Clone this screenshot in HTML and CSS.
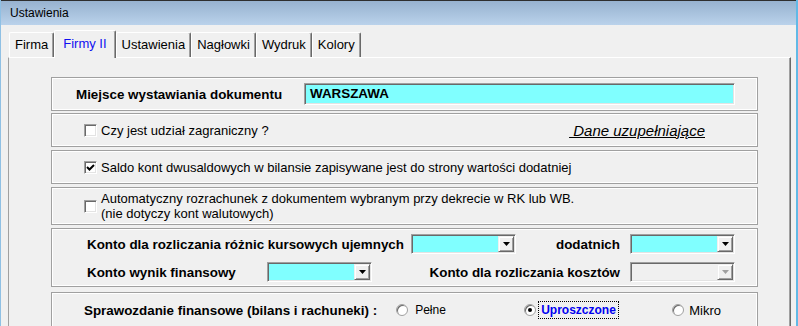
FILE: index.html
```html
<!DOCTYPE html>
<html lang="pl">
<head>
    <meta charset="UTF-8">
    <meta name="viewport" content="width=device-width, initial-scale=1.0">
    <title>Ustawienia</title>
    <link rel="stylesheet" href="styles.css">
</head>
<body>
    <div class="window">
        <div class="titlebar">Ustawienia</div>

        <div class="tabs">
            <div class="tab">Firma</div>
            <div class="tab active">Firmy II</div>
            <div class="tab">Ustawienia</div>
            <div class="tab">Nagłowki</div>
            <div class="tab">Wydruk</div>
            <div class="tab">Kolory</div>
        </div>

        <div class="panel">
            <!-- miejsce wystawiania -->
            <div class="box box-place">
                <span class="label-bold">Miejsce wystawiania dokumentu</span>
                <div class="field field-place">WARSZAWA</div>
            </div>

            <div class="box box-check">
                <span class="check"></span>
                <span>Czy jest udział zagraniczny ?</span>
                <span class="link">&nbsp;Dane uzupełniające</span>
            </div>

            <div class="box box-check">
                <span class="check checked">
                    <svg width="11" height="11" viewBox="0 0 11 11"><path d="M2 5 L4.5 7.5 L9 3" fill="none" stroke="#000" stroke-width="2"/></svg>
                </span>
                <span>Saldo kont dwusaldowych w bilansie zapisywane jest do strony wartości dodatniej</span>
            </div>

            <div class="box box-check box-tall">
                <span class="check"></span>
                <span class="two-lines">Automatyczny rozrachunek z dokumentem wybranym przy dekrecie w RK lub WB.<br>(nie dotyczy kont walutowych)</span>
            </div>

            <!-- konta -->
            <div class="box box-accounts">
                <div class="acc-row">
                    <span class="label-bold lbl-long">Konto dla rozliczania różnic kursowych ujemnych</span>
                    <div class="combo"><span class="combo-btn"><svg width="7" height="4" viewBox="0 0 7 4"><polygon points="0,0 7,0 3.5,4" fill="#000"/></svg></span></div>
                    <span class="label-bold lbl-right">dodatnich</span>
                    <div class="combo"><span class="combo-btn"><svg width="7" height="4" viewBox="0 0 7 4"><polygon points="0,0 7,0 3.5,4" fill="#000"/></svg></span></div>
                </div>
                <div class="acc-row">
                    <span class="label-bold lbl-short">Konto wynik finansowy</span>
                    <div class="combo"><span class="combo-btn"><svg width="7" height="4" viewBox="0 0 7 4"><polygon points="0,0 7,0 3.5,4" fill="#000"/></svg></span></div>
                    <span class="label-bold lbl-right">Konto dla rozliczania kosztów</span>
                    <div class="combo disabled"><span class="combo-btn"><svg width="7" height="4" viewBox="0 0 7 4"><polygon points="0,0 7,0 3.5,4" fill="#a0a0a0"/></svg></span></div>
                </div>
            </div>

            <!-- sprawozdanie -->
            <div class="box box-report">
                <span class="label-bold">Sprawozdanie finansowe (bilans i rachuneki) :</span>
                <div class="radios">
                    <div class="opt opt-a"><span class="radio"></span><span class="radio-label">Pełne</span></div>
                    <div class="opt opt-b"><span class="radio on"></span><span class="radio-label focus">Uproszczone</span></div>
                    <div class="opt"><span class="radio"></span><span class="radio-label big">Mikro</span></div>
                </div>
            </div>
        </div>
    </div>
</body>
</html>
```

FILE: styles.css
```css
* {
    box-sizing: border-box;
}
body {
    margin: 0;
    font-family: "Liberation Sans", Arial, sans-serif;
    font-size: 13px;
    color: #000;
    background-color: #f0f0f0;
    overflow: hidden;
}
.window {
    width: 798px;
    height: 326px;
    overflow: hidden;
    background-color: #f0f0f0;
    border-left: 1px solid #8fc0e4;
    border-right: 2px solid #62b9e6;
}
.titlebar {
    height: 25px;
    border-top: 1px solid #2e2e2e;
    background: linear-gradient(#97b2cf, #bad2eb);
    padding-left: 9px;
    line-height: 25px;
    font-size: 12px;
}

/* tabs */
.tabs {
    display: flex;
    align-items: flex-end;
    height: 32px;
    padding-left: 8px;
}
.tab {
    height: 25px;
    line-height: 24px;
    padding: 0 5px;
    border-top: 1px solid #fff;
    border-left: 1px solid #fff;
    border-right: 1px solid #696969;
    box-shadow: inset -1px 0 #a0a0a0;
    border-radius: 2px 2px 0 0;
    background-color: #f0f0f0;
}
.tab.active {
    position: relative;
    z-index: 1;
    height: 28px;
    line-height: 25px;
    margin-bottom: -1px;
    padding: 0 8px;
    color: #1010f0;
}

.panel {
    margin-left: 7px;
    width: 783px;
    height: 300px;
    border-top: 1px solid #fff;
    border-left: 1px solid #a0a0a0;
    border-right: 1px solid #696969;
    box-shadow: inset -1px 0 #a0a0a0;
    padding: 19px 0 0 42px;
}

/* group boxes */
.box {
    width: 707px;
    height: 34px;
    border: 1px solid #a0a0a0;
    box-shadow: inset 0 0 0 1px #fff;
    margin-bottom: 3px;
    display: flex;
    align-items: center;
}
.box-place {
    padding: 0 22px 0 24px;
    margin-bottom: 2px;
}
.box-check {
    padding: 0 52px 0 32px;
}
.box-tall {
    height: 38px;
}
.label-bold {
    font-weight: bold;
    font-size: 13.4px;
}
.field {
    background-color: #80ffff;
    border: 1px solid;
    border-color: #a0a0a0 #fff #fff #a0a0a0;
    box-shadow: inset 1px 1px #696969, inset -1px -1px #e3e3e3;
}
.field-place {
    margin-left: auto;
    width: 431px;
    height: 22px;
    line-height: 20px;
    padding-left: 5px;
    font-weight: bold;
    font-size: 13.4px;
}
.check {
    flex: none;
    width: 13px;
    height: 13px;
    margin-right: 4px;
    background-color: #fff;
    border: 1px solid;
    border-color: #a0a0a0 #fff #fff #a0a0a0;
    box-shadow: inset 1px 1px #696969, inset -1px -1px #e3e3e3;
    display: flex;
    align-items: center;
    justify-content: center;
}
.two-lines {
    line-height: 15px;
}
.link {
    margin-left: auto;
    font-size: 15px;
    font-style: italic;
    text-decoration: underline;
}

/* accounts */
.box-accounts {
    height: 59px;
    margin-bottom: 5px;
    flex-direction: column;
    align-items: stretch;
    justify-content: flex-start;
    gap: 8px;
    padding: 5px 22px 0 35px;
}
.acc-row {
    display: flex;
    align-items: center;
    height: 20px;
}
.lbl-long {
    width: 324px;
}
.lbl-short {
    width: 180px;
}
.lbl-right {
    margin-left: auto;
    margin-right: 10px;
}
.combo {
    position: relative;
    width: 105px;
    height: 20px;
    background-color: #80ffff;
    border: 1px solid;
    border-color: #a0a0a0 #fff #fff #a0a0a0;
    box-shadow: inset 1px 1px #696969, inset -1px -1px #e3e3e3;
    display: flex;
    justify-content: flex-end;
    padding: 1px;
}
.combo.disabled {
    background-color: #f0f0f0;
}
.combo-btn {
    width: 16px;
    height: 16px;
    background-color: #f0f0f0;
    border: 1px solid;
    border-color: #f0f0f0 #696969 #696969 #f0f0f0;
    box-shadow: inset 1px 1px #fff, inset -1px -1px #a0a0a0;
    display: flex;
    align-items: center;
    justify-content: center;
}

/* report */
.box-report {
    padding-left: 32px;
    height: 36px;
}
.radios {
    display: flex;
    align-items: center;
    margin-left: 19px;
    font-size: 12px;
}
.opt {
    display: flex;
    align-items: center;
}
.opt-a {
    width: 128px;
}
.opt-b {
    width: 148px;
}
.radio {
    flex: none;
    width: 12px;
    height: 12px;
    border-radius: 50%;
    background-color: #fff;
    border: 1px solid #a0a0a0;
    box-shadow: inset 1px 1px #696969;
    display: flex;
    align-items: center;
    justify-content: center;
}
.radio.on::after {
    content: "";
    width: 4px;
    height: 4px;
    border-radius: 50%;
    background-color: #000;
}
.radio-label {
    margin-left: 2px;
    padding: 1px 2px;
    border: 1px dotted transparent;
}
.opt-a .radio-label {
    margin-left: 4px;
}
.radio-label.big {
    font-size: 13px;
}
.radio-label.focus {
    color: #0000f0;
    font-weight: bold;
    border-color: #000;
}
```
